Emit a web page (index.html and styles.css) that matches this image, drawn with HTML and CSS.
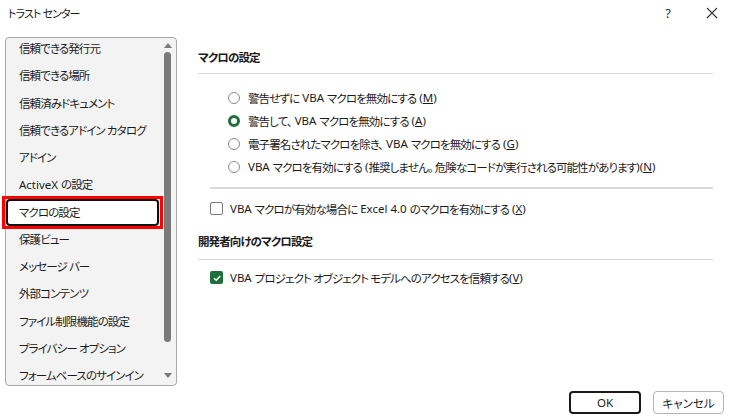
FILE: index.html
```html
<!DOCTYPE html>
<html lang="ja">
<head>
  <meta charset="UTF-8" />
  <title>トラスト センター</title>
  <link rel="stylesheet" href="styles.css">
</head>
<body>

  <div class="titlebar">
    <span class="title">トラスト センター</span>
    <span class="help">?</span>
    <svg class="close" width="12" height="12" viewBox="0 0 12 12">
      <path d="M1 1 L11 11 M11 1 L1 11" stroke="#333" stroke-width="1.1" fill="none" />
    </svg>
  </div>

  <div class="main">
    <div class="nav">
      <div class="nav-items">
        <div class="nav-item first">信頼できる発行元</div>
        <div class="nav-item">信頼できる場所</div>
        <div class="nav-item">信頼済みドキュメント</div>
        <div class="nav-item">信頼できるアドイン カタログ</div>
        <div class="nav-item">アドイン</div>
        <div class="nav-item"><span class="en">ActiveX </span>の設定</div>
        <div class="nav-item selected">マクロの設定<span class="mark"></span></div>
        <div class="nav-item">保護ビュー</div>
        <div class="nav-item">メッセージ バー</div>
        <div class="nav-item">外部コンテンツ</div>
        <div class="nav-item">ファイル制限機能の設定</div>
        <div class="nav-item">プライバシー オプション</div>
        <div class="nav-item">フォームベースのサインイン</div>
      </div>
      <div class="scrollbar">
        <span class="arrow up"></span>
        <span class="thumb"></span>
        <span class="arrow down"></span>
      </div>
    </div>

    <div class="panel">
      <div class="section-title">マクロの設定</div>

      <div class="radios">
        <label class="option"><span class="radio"></span>警告せずに<span class="en"> VBA </span>マクロを無効にする<span class="en"> (<u>M</u>)</span></label>
        <label class="option"><span class="radio on"></span>警告して、<span class="en"> VBA </span>マクロを無効にする<span class="en"> (<u>A</u>)</span></label>
        <label class="option"><span class="radio"></span>電子署名されたマクロを除き、<span class="en"> VBA </span>マクロを無効にする<span class="en"> (<u>G</u>)</span></label>
        <label class="option"><span class="radio"></span><span class="en">VBA </span>マクロを有効にする<span class="en"> (</span>推奨しません。 危険なコードが実行される可能性があります<span class="en">)(<u>N</u>)</span></label>
      </div>

      <div class="divider"></div>

      <label class="option check-row"><span class="check"></span><span class="en">VBA </span>マクロが有効な場合に<span class="en"> Excel 4.0 </span>のマクロを有効にする<span class="en"> (<u>X</u>)</span></label>

      <div class="section-title second">開発者向けのマクロ設定</div>

      <label class="option check-row last">
        <span class="check on">
          <svg width="12" height="12" viewBox="0 0 12 12"><path d="M3 6.2 L5.2 8.3 L9.2 4" stroke="#fff" stroke-width="1.5" fill="none" /></svg>
        </span><span class="en">VBA </span>プロジェクト オブジェクト モデルへのアクセスを信頼する<span class="en">(<u>V</u>)</span>
      </label>
    </div>
  </div>

  <div class="footer">
    <button class="btn default">OK</button>
    <button class="btn">キャンセル</button>
  </div>

</body>
</html>
```

FILE: styles.css
```css
html, body {
  margin: 0;
  height: 420px;
  background: #fff;
}
body {
  font-family: "Noto Sans", "Noto Sans CJK JP", sans-serif;
  font-feature-settings: "palt";
  font-size: 11.5px;
  letter-spacing: -0.9px;
  color: #1b1b1b;
  display: flex;
  flex-direction: column;
}
.en {
  font-size: 11.5px;
  letter-spacing: 0;
  white-space: pre;
}

/* title bar */
.titlebar {
  height: 30px;
  display: flex;
  align-items: center;
  padding: 0 13px 0 8px;
  box-sizing: border-box;
}
.title {
  flex: 1;
  font-size: 11px;
  margin-top: -4px;
}
.help {
  font-size: 13px;
  margin-right: 36px;
  margin-top: -4px;
  color: #333;
}
.close {
  margin-top: -4px;
}

.main {
  display: flex;
  padding: 7px 18px 0 5px;
  gap: 21px;
}

/* category list */
.nav {
  width: 172px;
  height: 349px;
  box-sizing: border-box;
  border: 1px solid #a9a9a9;
  border-radius: 4px;
  background: #f3f3f3;
  display: flex;
}
.nav-items {
  flex: 1;
  clip-path: inset(0 -10px 0 -10px);
}
.nav-item {
  position: relative;
  height: 27.25px;
  line-height: 27px;
  padding-left: 13px;
  white-space: nowrap;
}
.nav-item.first {
  margin-top: -3px;
}
.nav-item.selected {
  background: #fff;
  border: 2px solid #111;
  border-radius: 4px;
  line-height: 23px;
  box-sizing: border-box;
  padding-left: 11px;
}
.nav-item .mark {
  position: absolute;
  top: -5px;
  bottom: -5px;
  left: -6px;
  right: -6px;
  border: 3px solid #ff0000;
}
.scrollbar {
  width: 17px;
  display: flex;
  flex-direction: column;
  align-items: center;
  padding: 5px 0 3px;
  box-sizing: border-box;
}
.arrow {
  width: 0;
  height: 0;
  border-left: 4px solid transparent;
  border-right: 4px solid transparent;
}
.arrow.up {
  border-bottom: 5px solid #7a7a7a;
}
.arrow.down {
  border-top: 5px solid #7a7a7a;
}
.thumb {
  width: 7px;
  height: 290px;
  margin: 4px 0 31px;
  border-radius: 4px;
  background: #7a7a7a;
}

/* settings panel */
.panel {
  flex: 1;
}
.section-title {
  font-weight: bold;
  line-height: 18px;
  margin-top: 12px;
  padding-bottom: 6px;
  border-bottom: 1px solid #d9d9d9;
}
.section-title.second {
  margin-top: 13px;
  padding-bottom: 8px;
}
.radios {
  margin-top: 12px;
  padding-left: 30px;
}
.option {
  display: flex;
  align-items: center;
  height: 23px;
  white-space: nowrap;
}
.radio {
  width: 10px;
  height: 10px;
  border: 1px solid #8a8a8a;
  border-radius: 50%;
  margin-right: 8px;
  flex-shrink: 0;
}
.radio.on {
  width: 6px;
  height: 6px;
  border: 3px solid #1e6f3c;
}
.divider {
  margin: 9px 0 0 12px;
  border-top: 2px solid #d9d9d9;
}
.check-row {
  padding-left: 12px;
  margin-top: 8px;
}
.check-row.last {
  margin-top: 6px;
}
.check {
  width: 11px;
  height: 11px;
  border: 1px solid #7a7a7a;
  border-radius: 2px;
  margin-right: 7px;
  flex-shrink: 0;
}
.check.on {
  width: 13px;
  height: 13px;
  border: 0;
  background: #1e6f3c;
  display: flex;
  align-items: center;
  justify-content: center;
}

/* dialog buttons */
.footer {
  display: flex;
  justify-content: flex-end;
  gap: 12px;
  padding-right: 7px;
  margin-top: 5px;
}
.btn {
  font: inherit;
  height: 23px;
  width: 71px;
  background: #fff;
  border: 1px solid #b5b5b5;
  border-radius: 4px;
  color: #1b1b1b;
}
.btn.default {
  width: 72px;
  border: 2px solid #1a1a1a;
}
```
